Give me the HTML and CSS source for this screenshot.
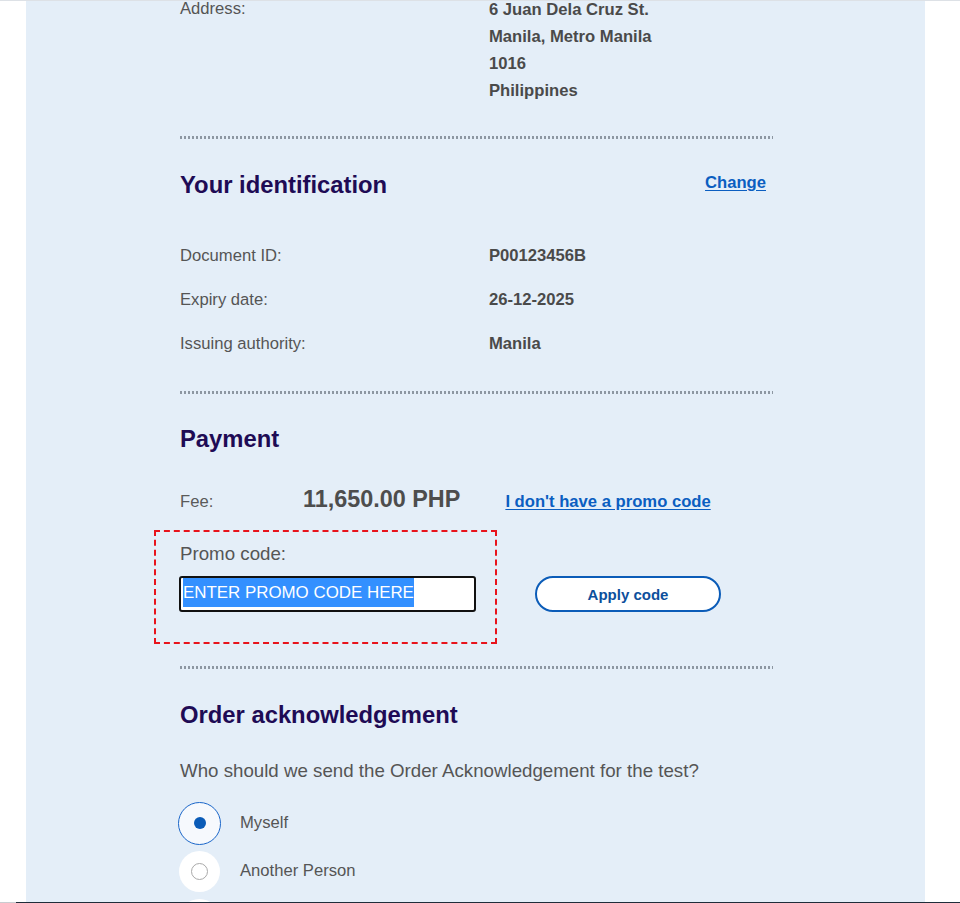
FILE: index.html
```html
<!DOCTYPE html>
<html lang="en">
<head>
<meta charset="utf-8">
<title>Review your order</title>
<link rel="stylesheet" href="styles.css">
</head>
<body>
<div class="page">
  <div class="topline"></div>
  <main class="panel">
    <div class="content">
      <section class="address">
        <div class="label address-label">Address:</div>
        <div class="value address-lines">6 Juan Dela Cruz St.<br>Manila, Metro Manila<br>1016<br>Philippines</div>
      </section>

      <section class="section section-id">
        <div class="section-head">
          <h2>Your identification</h2>
          <a class="link change" href="#">Change</a>
        </div>
        <dl class="details">
          <dt>Document ID:</dt><dd>P00123456B</dd>
          <dt>Expiry date:</dt><dd>26-12-2025</dd>
          <dt>Issuing authority:</dt><dd>Manila</dd>
        </dl>
      </section>

      <section class="section section-pay">
        <h2>Payment</h2>
        <div class="fee-row">
          <span class="fee-label">Fee:</span>
          <span class="fee-amount">11,650.00 PHP</span>
          <a class="link no-promo" href="#">I don't have a promo code</a>
        </div>
        <div class="promo-row">
          <div class="promo-box">
            <label class="promo-label" for="promo">Promo code:</label>
            <div class="promo-input" id="promo"><span class="selected">ENTER PROMO CODE HERE</span></div>
          </div>
          <button class="apply" type="button">Apply code</button>
        </div>
      </section>

      <section class="section section-order">
        <h2>Order acknowledgement</h2>
        <p class="question">Who should we send the Order Acknowledgement for the test?</p>
        <div class="radios">
          <div class="radio">
            <span class="radio-slot"><span class="circle checked"><span class="dot"></span></span></span>
            <span class="radio-text">Myself</span>
          </div>
          <div class="radio">
            <span class="radio-slot"><span class="circle plain"><span class="ring"></span></span></span>
            <span class="radio-text">Another Person</span>
          </div>
          <div class="radio">
            <span class="radio-slot"><span class="circle plain"><span class="ring"></span></span></span>
          </div>
        </div>
      </section>
    </div>
  </main>
  <div class="bottomline"></div>
</div>
</body>
</html>
```

FILE: styles.css
```css
html, body {
  margin: 0;
  padding: 0;
  height: 903px;
  overflow: hidden;
  background: #ffffff;
  font-family: "Liberation Sans", Arial, sans-serif;
  color: #555555;
}

.page {
  height: 903px;
  display: flex;
  flex-direction: column;
}

.topline {
  flex: none;
  height: 1px;
  background: #dde1e6;
}

.panel {
  flex: 1;
  min-height: 0;
  margin-left: 26px;
  width: 899px;
  background: #e4eef8;
  overflow: hidden;
}

.bottomline {
  flex: none;
  height: 1px;
  background: linear-gradient(to right, #c9ccd0 16px, #1f2d3a 16px);
}

.content {
  margin-left: 154px;
  width: 593px;
}

/* address */
.address {
  display: grid;
  grid-template-columns: 309px 1fr;
  margin-top: -5px;
  margin-bottom: 32px;
  font-size: 16.64px;
  line-height: 27px;
}

.address-label {
  margin-top: -1px;
}

.value,
.details dd {
  font-weight: bold;
  color: #4a4a4a;
}

/* sections: dotted rule drawn as the section's top edge */
.section {
  background-image: repeating-linear-gradient(to right, #8d97a2 0 2px, transparent 2px 4px);
  background-size: 100% 3px;
  background-repeat: no-repeat;
  background-position: 0 0;
}

.section-id { padding-top: 35px; }
.section-pay { padding-top: 34px; }
.section-order { padding-top: 35px; }

h2 {
  margin: 0;
  font-size: 23.8px;
  line-height: 28px;
  font-weight: bold;
  color: #1e0b55;
}

.section-head {
  display: flex;
  justify-content: space-between;
  align-items: center;
  padding-right: 7px;
}

.link {
  color: #0b5ec1;
  font-weight: bold;
  font-size: 16.64px;
  text-decoration: underline;
  text-underline-offset: 2px;
}

.change {
  margin-top: -4px;
}

.details {
  display: grid;
  grid-template-columns: 309px 1fr;
  row-gap: 20px;
  margin: 45px 0 35px;
  font-size: 16.64px;
  line-height: 24px;
}

.details dt,
.details dd {
  margin: 0;
}

/* payment */
.fee-row {
  display: flex;
  align-items: baseline;
  margin-top: 31px;
  line-height: 30px;
}

.fee-label {
  width: 123px;
  font-size: 16.64px;
  color: #5a5a5a;
}

.fee-amount {
  font-size: 23.4px;
  font-weight: bold;
  color: #4d4d4d;
}

.no-promo {
  margin-left: 45px;
}

.promo-row {
  display: flex;
  align-items: flex-end;
  margin-top: 13px;
  margin-bottom: 22px;
}

.promo-box {
  margin-left: -26px;
  border: 2px dashed #e8131c;
  padding: 10px 19px 30px 23px;
}

.promo-label {
  display: block;
  font-size: 18.72px;
  line-height: 24px;
  color: #555555;
  margin-bottom: 10px;
  padding-left: 1px;
}

.promo-input {
  box-sizing: border-box;
  width: 297px;
  height: 36px;
  border: 2px solid #111111;
  border-radius: 3px;
  background: #ffffff;
  padding: 0 2px;
  display: flex;
  align-items: flex-start;
}

.selected {
  display: inline-block;
  height: 29px;
  line-height: 29px;
  font-size: 16.9px;
  background: #3390ff;
  color: #ffffff;
}

.apply {
  box-sizing: border-box;
  width: 186px;
  height: 36px;
  margin-left: 38px;
  margin-bottom: 32px;
  border: 2px solid #0b5cb8;
  border-radius: 18px;
  background: #ffffff;
  color: #0c4f9c;
  font-family: "Liberation Sans", Arial, sans-serif;
  font-size: 15px;
  font-weight: bold;
  padding: 0;
}

/* order acknowledgement */
.question {
  margin: 29px 0 0;
  font-size: 18.72px;
  line-height: 26px;
  color: #555555;
}

.radios {
  margin-top: 15px;
}

.radio {
  display: flex;
  align-items: center;
  height: 48px;
  gap: 19px;
  font-size: 16.64px;
  color: #555555;
}

.radio-slot {
  width: 43px;
  height: 43px;
  margin-left: -2px;
  display: flex;
  align-items: center;
  justify-content: center;
}

.circle {
  box-sizing: border-box;
  border-radius: 50%;
  display: flex;
  align-items: center;
  justify-content: center;
}

.circle.checked {
  width: 43px;
  height: 43px;
  border: 1.5px solid #1a66c9;
  background: #f6f9fd;
}

.circle.plain {
  width: 41px;
  height: 41px;
  background: #ffffff;
}

.dot {
  width: 12px;
  height: 12px;
  border-radius: 50%;
  background: #0a5bb7;
}

.ring {
  box-sizing: border-box;
  width: 17px;
  height: 17px;
  border-radius: 50%;
  border: 1px solid #a9a9a9;
  background: #ffffff;
}
```
